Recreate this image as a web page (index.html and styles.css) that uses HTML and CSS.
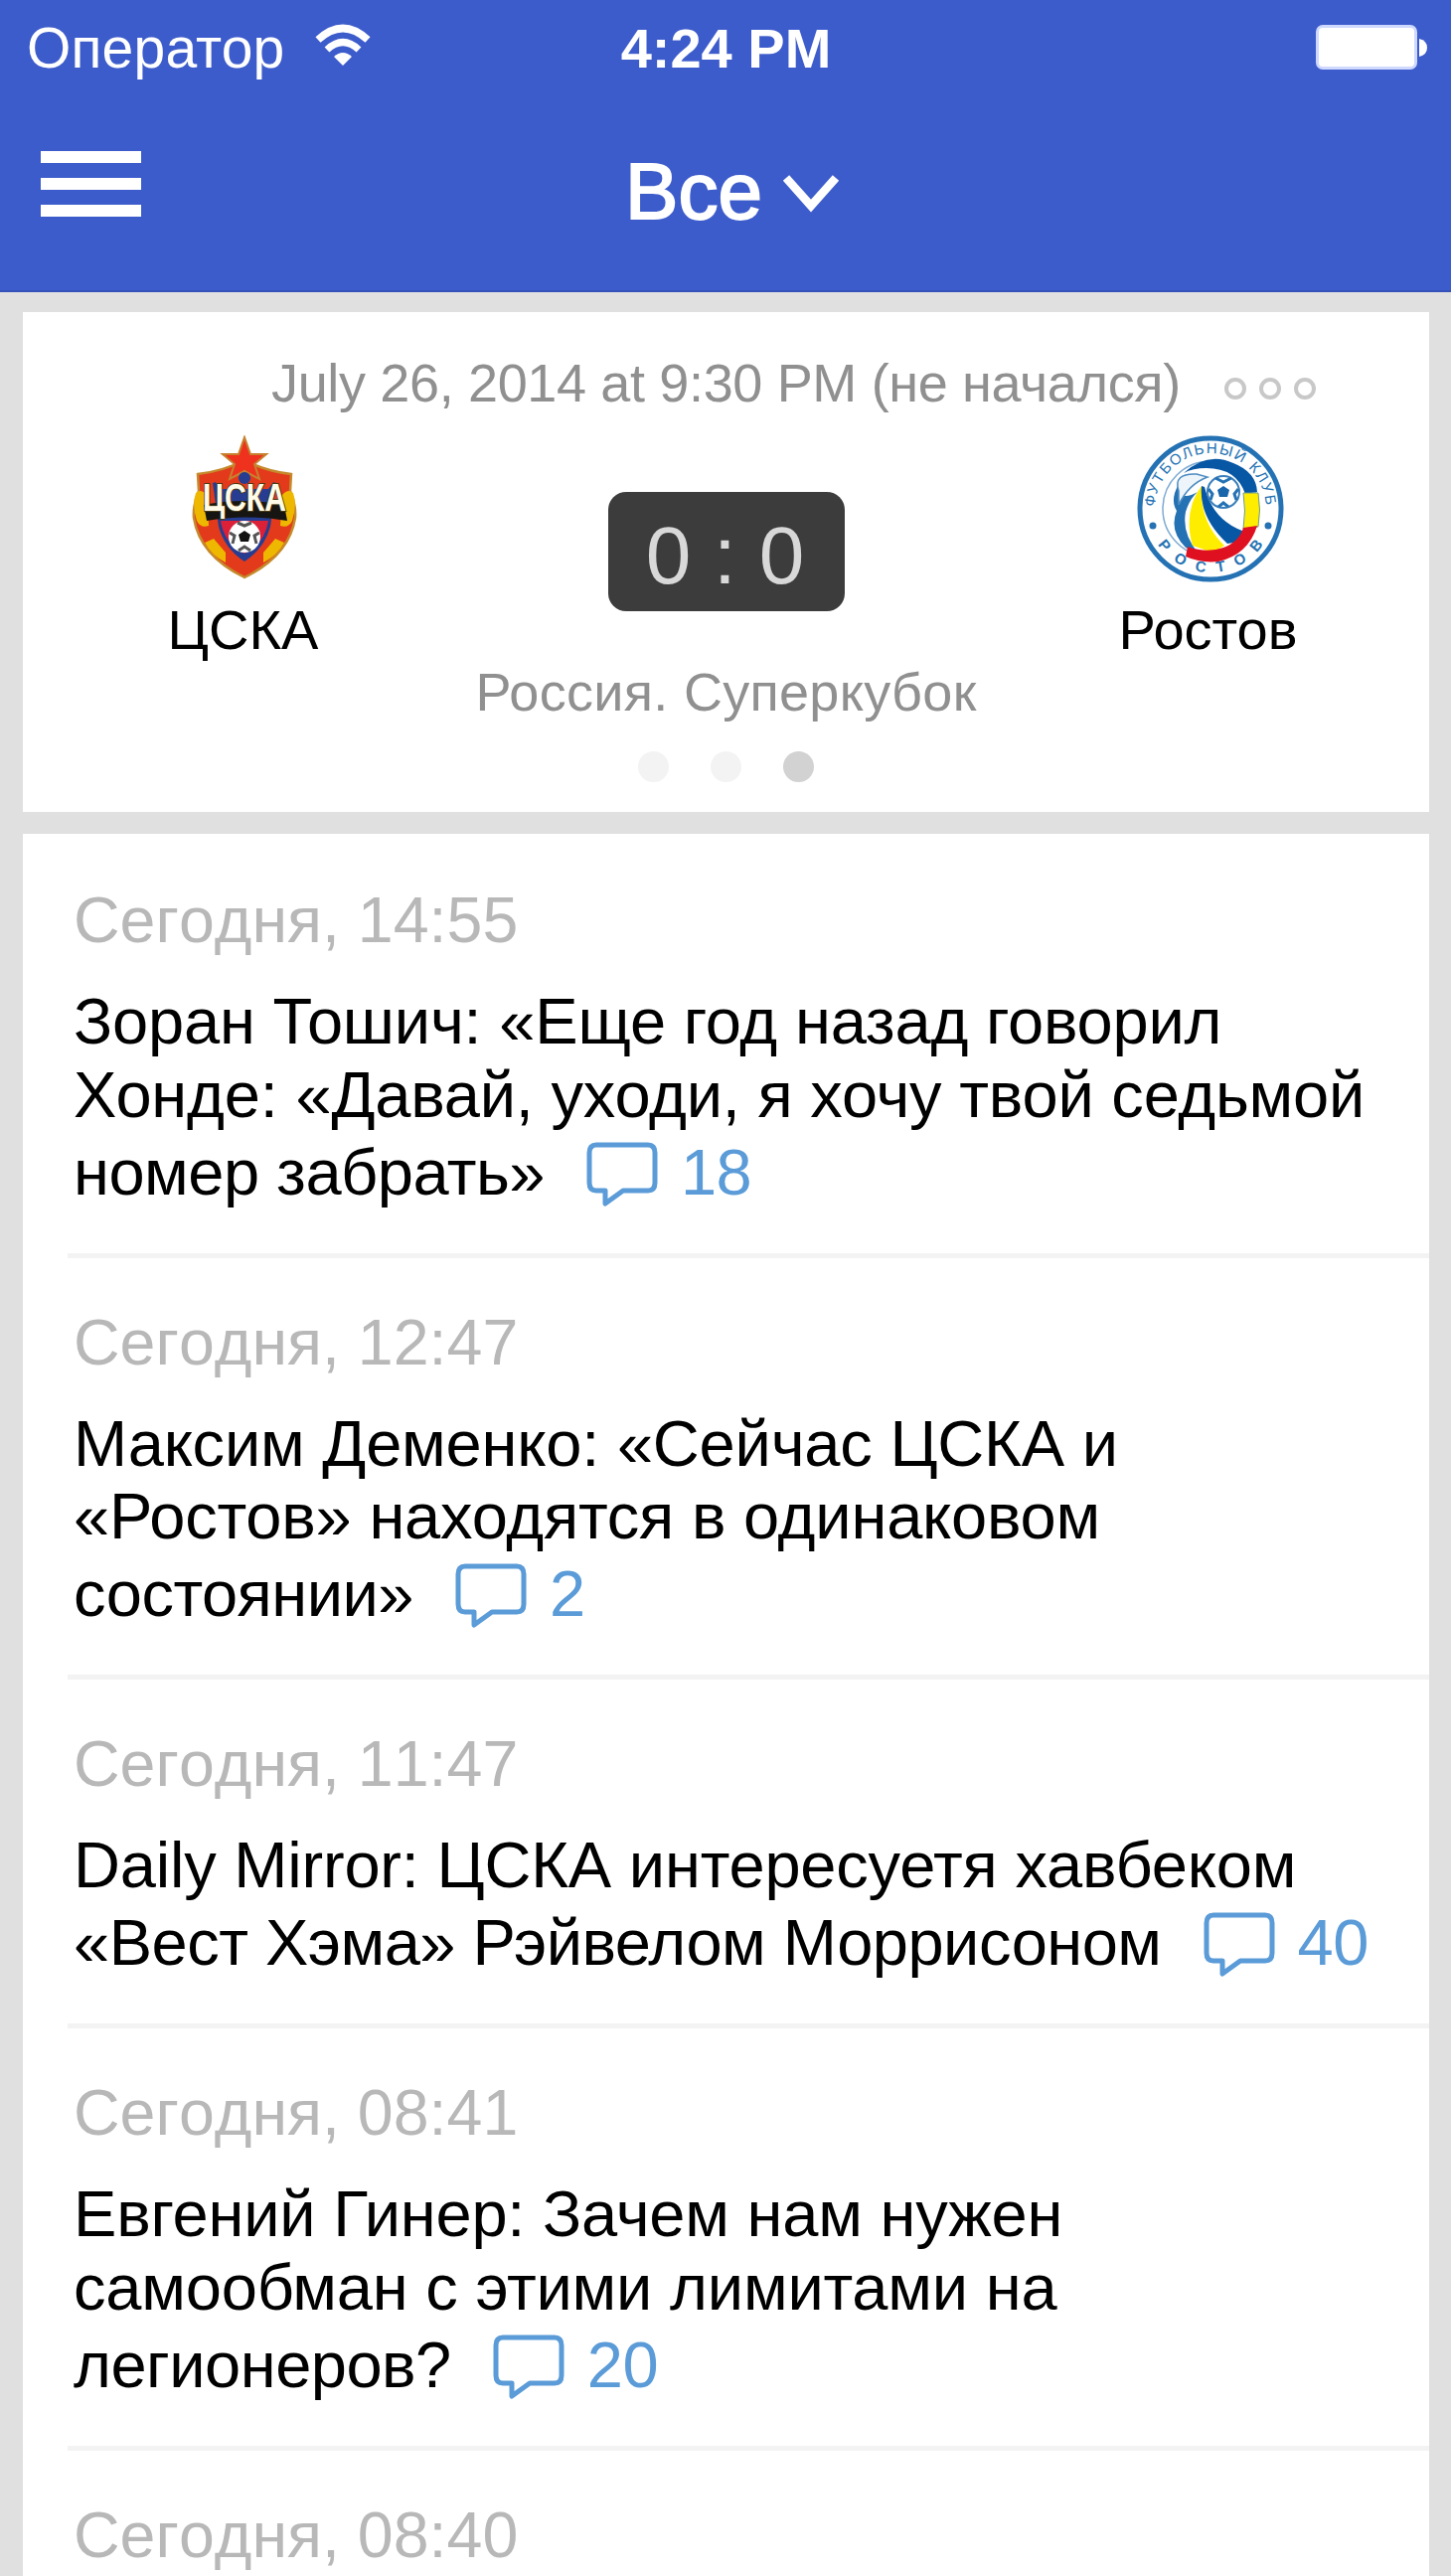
FILE: index.html
```html
<!DOCTYPE html>
<html lang="ru">
  <head>
    <meta charset="UTF-8" />
    <meta name="viewport" content="width=device-width, initial-scale=1.0" />
    <title>ЦСКА: новости</title>
    <link rel="stylesheet" href="styles.css">
  </head>
  <body>
    <svg width="0" height="0" class="sprite">
      <symbol id="comment" viewBox="0 0 72 66">
        <path d="M10 3H62Q69 3 69 11V41Q69 49 62 49H37L19 62V49H10Q3 49 3 41V11Q3 3 10 3Z" fill="none" stroke="#5a9bd8" stroke-width="5" stroke-linejoin="round" />
      </symbol>
    </svg>

    <header class="header">
      <div class="status">
        <div class="carrier">
          <span>Оператор</span>
          <svg class="wifi" width="58" height="44" viewBox="0 0 58 44">
            <path d="M4 16Q29 -7 54 16" fill="none" stroke="#fff" stroke-width="7.5" />
            <path d="M13 26Q29 11 45 26" fill="none" stroke="#fff" stroke-width="7" />
            <path d="M20 33Q29 25 38 33L29 42Z" fill="#fff" />
          </svg>
        </div>
        <div class="time">4:24 PM</div>
        <svg class="battery" width="114" height="48" viewBox="0 0 114 48">
          <rect x="1" y="1" width="102" height="45" rx="7" fill="#cfd9ff" />
          <rect x="4" y="4" width="96" height="39" rx="4" fill="#fff" />
          <path d="M105 15Q113 17 113 24Q113 31 105 33Z" fill="#fff" />
        </svg>
      </div>
      <div class="navbar">
        <div class="menu"><i></i><i></i><i></i></div>
        <div class="title">
          <span>Все</span>
          <svg width="58" height="38" viewBox="0 0 58 38">
            <path d="M4 3L29 31L54 3" fill="none" stroke="#fff" stroke-width="8.5" />
          </svg>
        </div>
      </div>
    </header>

    <main>
      <section class="match">
        <div class="match-top">
          <span class="match-date">July 26, 2014 at 9:30 PM (не начался)</span>
          <span class="more"><i></i><i></i><i></i></span>
        </div>
        <div class="teams">
          <div class="team">
            <svg width="108" height="146" viewBox="0 0 108 146">
              <path d="M7 39Q33 36 54 25Q75 36 101 39L100 56Q106 70 105 83Q99 121 54 143Q9 121 3 83Q2 70 8 56Z" fill="#e33a1c" stroke="#c58a2c" stroke-width="2.5" />
              <path d="M5 58Q10 53 16 60L18 91Q10 94 6 86Q1 70 5 58ZM103 58Q98 53 92 60L90 91Q98 94 102 86Q107 70 103 58Z" fill="#efb800" />
              <path d="M14 108L23 104L35 118V128Q21 121 14 108ZM94 108L85 104L73 118V128Q87 121 94 108Z" fill="#efb800" />
              <path d="M22 48Q54 36 86 48L80 92Q74 114 54 127Q34 114 28 92Z" fill="#263d91" />
              <path d="M24 46L54 36L84 46L78 54H30Z" fill="#e33a1c" />
              <path d="M30 86H78Q75 108 54 119Q33 108 30 86Z" fill="#dc2038" />
              <path d="M54 2L60 19H76L64 29L69 44L54 36L39 44L44 29L32 19H48Z" fill="#ee321d" stroke="#c7812e" stroke-width="2" />
              <circle cx="54" cy="43" r="6" fill="#263d91" />
              <path d="M13 70Q54 62 94 70L97 86Q54 79 16 86Z" fill="#171512" />
              <text x="54" y="76" class="crest-name" textLength="84" lengthAdjust="spacingAndGlyphs">ЦСКА</text>
              <circle cx="54" cy="102" r="16" fill="#fff" />
              <path d="M54 96L60 100L58 107H50L48 100Z" fill="#111" />
              <path d="M47 88L54 91L61 88M39 98L44 101L42 109M69 98L64 101L66 109M48 116L54 112L60 116" fill="none" stroke="#555" stroke-width="3" />
            </svg>
            <span class="name-left">ЦСКА</span>
          </div>
          <div class="score">0 : 0</div>
          <div class="team team-right">
            <svg width="148" height="148" viewBox="0 0 148 148">
              <defs>
                <path id="ring-top" d="M18 74A56 56 0 0 1 130 74" />
                <path id="ring-bottom" d="M10 74A64 64 0 0 0 138 74" />
              </defs>
              <circle cx="74" cy="74" r="71" fill="#fff" stroke="#2472b3" stroke-width="5" />
              <circle cx="74" cy="74" r="48" fill="#fff" stroke="#7eabd2" stroke-width="1.5" />
              <text class="ring-text"><textPath href="#ring-top" startOffset="2" textLength="170">ФУТБОЛЬНЫЙ КЛУБ</textPath></text>
              <text class="ring-text ring-bold"><textPath href="#ring-bottom" startOffset="38" textLength="125">РОСТОВ</textPath></text>
              <circle cx="16" cy="91" r="3.5" fill="#2472b3" />
              <circle cx="132" cy="91" r="3.5" fill="#2472b3" />
              <path d="M47 38Q71 16 97 28Q120 37 121 57L109 59Q100 33 70 33Q56 33 47 38Z" fill="#0757a5" />
              <path d="M42 49Q33 65 40 76Q32 96 49 113L61 118Q45 98 49 77Q53 64 61 57Q42 68 42 49Z" fill="#2472b3" />
              <path d="M42 56Q36 38 60 39L71 42Q52 49 42 70Z" fill="#edf4fa" stroke="#4d8cc2" stroke-width="1.5" />
              <path d="M65 51Q46 77 56 111L76 118L88 111Q63 87 65 51Z" fill="#ffed00" />
              <path d="M65 51Q62 82 91 109Q105 108 112 98Q77 88 68 52Z" fill="#0757a5" />
              <path d="M107 58H122Q125 75 122 92L107 94Q110 76 107 58Z" fill="#ffed00" stroke="#6c9b8b" stroke-width="1" />
              <path d="M107 93L121 91Q112 120 82 127Q65 129 49 122L51 112Q70 119 87 113Q103 107 107 93Z" fill="#df1020" />
              <circle cx="87" cy="57" r="16" fill="#fff" stroke="#3b7fbb" stroke-width="2" />
              <path d="M87 51L93 55L91 62H83L81 55Z" fill="#1965ab" />
              <path d="M79 43L87 47L95 43M72 54L76 59L74 65M102 54L98 59L100 65M82 72L87 68L92 72" fill="none" stroke="#2472b3" stroke-width="3" />
            </svg>
            <span class="name-right">Ростов</span>
          </div>
        </div>
        <div class="league">Россия. Суперкубок</div>
        <div class="pager"><i></i><i></i><i class="active"></i></div>
      </section>

      <section class="news">
        <article class="item">
          <time>Сегодня, 14:55</time>
          <h2>Зоран Тошич: «Еще год назад говорил<br>Хонде: «Давай, уходи, я хочу твой седьмой<br><span class="last">номер забрать» <svg class="comment"><use href="#comment" /></svg><b>18</b></span></h2>
        </article>
        <article class="item">
          <time>Сегодня, 12:47</time>
          <h2>Максим Деменко: «Сейчас ЦСКА и<br>«Ростов» находятся в одинаковом<br><span class="last">состоянии» <svg class="comment"><use href="#comment" /></svg><b>2</b></span></h2>
        </article>
        <article class="item">
          <time>Сегодня, 11:47</time>
          <h2>Daily Mirror: ЦСКА интересуетя хавбеком<br><span class="last">«Вест Хэма» Рэйвелом Моррисоном <svg class="comment"><use href="#comment" /></svg><b>40</b></span></h2>
        </article>
        <article class="item">
          <time>Сегодня, 08:41</time>
          <h2>Евгений Гинер: Зачем нам нужен<br>самообман с этими лимитами на<br><span class="last">легионеров? <svg class="comment"><use href="#comment" /></svg><b>20</b></span></h2>
        </article>
        <article class="item">
          <time>Сегодня, 08:40</time>
        </article>
      </section>
    </main>
  </body>
</html>
```
FILE: styles.css
```css
* {
  box-sizing: border-box;
}
body {
  margin: 0;
  height: 2592px;
  overflow: hidden;
  background: #e0e0e0;
  font-family: "Liberation Sans", Arial, sans-serif;
  color: #000;
}
.sprite {
  display: block;
}
.header {
  height: 294px;
  background: #3d5ccb;
  color: #fff;
  border-bottom: 2px solid #3552bb;
}
.status {
  height: 96px;
  display: grid;
  grid-template-columns: 1fr auto 1fr;
  align-items: center;
  padding: 0 23px 0 27px;
}
.carrier {
  display: flex;
  align-items: center;
  gap: 29px;
  font-size: 57px;
  letter-spacing: 0.2px;
}
.wifi {
  margin-top: -4px;
}
.time {
  font-size: 56px;
  font-weight: bold;
  margin-left: -3px;
}
.battery {
  justify-self: end;
}
.navbar {
  height: 196px;
  display: grid;
  grid-template-columns: 1fr auto 1fr;
  padding: 0 41px;
}
.menu {
  padding-top: 56px;
  display: flex;
  flex-direction: column;
  gap: 15px;
}
.menu i {
  width: 101px;
  height: 12px;
  background: #fff;
}
.title {
  padding: 49px 0 0 14px;
  display: flex;
  gap: 20px;
  font-size: 80px;
  line-height: 96px;
  -webkit-text-stroke: 2px #fff;
}
.title svg {
  margin-top: 31px;
}
main {
  padding: 20px 22px 0 23px;
  display: flex;
  flex-direction: column;
  gap: 22px;
}
.match {
  height: 503px;
  background: #fff;
}
.match-top {
  height: 124px;
  padding: 41px 114px 0 250px;
  display: flex;
  justify-content: space-between;
  font-size: 54px;
  line-height: 60px;
  letter-spacing: -0.35px;
  color: #909090;
}
.more {
  display: flex;
  gap: 13px;
  padding-top: 25px;
}
.more i {
  width: 22px;
  height: 22px;
  border: 4px solid #c8c8c8;
  border-radius: 50%;
}
.teams {
  height: 227px;
  display: grid;
  grid-template-columns: 445px 1fr 445px;
  justify-items: center;
}
.team {
  display: flex;
  flex-direction: column;
  align-items: center;
  width: 300px;
  height: 227px;
  justify-content: space-between;
  font-size: 56px;
  line-height: 62px;
}
.team-right {
  padding-left: 4px;
}
.name-left {
  margin-right: 2px;
}
.name-right {
  margin-right: 4px;
}
.crest-name {
  font: bold 38px "Liberation Sans", Arial, sans-serif;
  fill: #fffbe8;
  stroke: #4a3b16;
  stroke-width: 2;
  paint-order: stroke;
  text-anchor: middle;
}
.ring-text {
  font: 15px "Liberation Sans", Arial, sans-serif;
  fill: #2472b3;
}
.ring-bold {
  font-weight: bold;
}
.score {
  margin: 57px 0 0;
  width: 238px;
  height: 120px;
  padding-right: 2px;
  border-radius: 18px;
  background: #3c3c3c;
  color: #d8d8d8;
  font-size: 82px;
  line-height: 127px;
  text-align: center;
}
.league {
  font-size: 54px;
  line-height: 60px;
  margin-top: 1px;
  letter-spacing: 0.3px;
  text-align: center;
  color: #909090;
}
.pager {
  display: flex;
  justify-content: center;
  gap: 42px;
  margin-top: 30px;
}
.pager i {
  width: 31px;
  height: 31px;
  border-radius: 50%;
  background: #f3f3f3;
}
.pager .active {
  background: #d2d2d2;
}
.news {
  background: #fff;
  padding: 2px 0 40px 45px;
}
.item {
  padding: 49px 0 0 6px;
  border-bottom: 5px solid #f3f3f3;
}
.item:last-child {
  border: 0;
}
.item time {
  display: block;
  font-size: 64.5px;
  line-height: 72px;
  font-kerning: none;
  color: #b8b8b8;
}
.item h2 {
  margin: 29px 0 0;
  padding-bottom: 42.5px;
  font-size: 65px;
  font-weight: normal;
  line-height: 73.5px;
  letter-spacing: -0.2px;
  white-space: nowrap;
}
.last {
  display: flex;
  align-items: center;
  height: 80px;
  padding-top: 3px;
  letter-spacing: -0.5px;
}
.comment {
  width: 72px;
  height: 66px;
  margin: 4px 23px 0 42px;
}
.item b {
  font-weight: normal;
  color: #5a9bd8;
}
```
